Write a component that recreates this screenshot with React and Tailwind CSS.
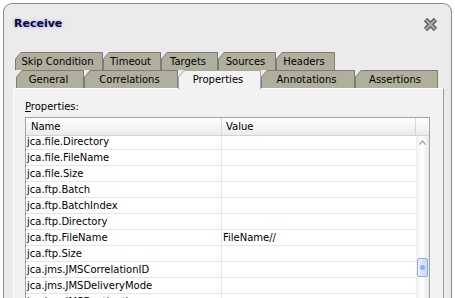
import React from "react";

function Tab({ w, label, selected }) {
  if (selected) {
    return (
      <div className={`${w} relative z-10 h-[19px] -mb-[1px] flex px-[1px] pt-[1px] bg-[#a6a6a6] [clip-path:polygon(6px_0,100%_0,100%_100%,0_100%,0_7px)]`}>
        <div className="flex-1 flex items-center justify-center pr-[3px] pb-[1px] bg-[#f2f2f2] [clip-path:polygon(5px_0,100%_0,100%_100%,0_100%,0_6px)]">
          {label}
        </div>
      </div>
    );
  }
  return (
    <div className={`${w} h-[18px] flex px-[1px] pt-[1px] bg-[#7c7c7c] [clip-path:polygon(6px_0,100%_0,100%_100%,0_100%,0_7px)]`}>
      <div className="flex-1 flex items-center justify-center pr-[3px] bg-[#b0af9b] [clip-path:polygon(5px_0,100%_0,100%_100%,0_100%,0_6px)]">
        {label}
      </div>
    </div>
  );
}

const rows = [
  ["jca.file.Directory", ""],
  ["jca.file.FileName", ""],
  ["jca.file.Size", ""],
  ["jca.ftp.Batch", ""],
  ["jca.ftp.BatchIndex", ""],
  ["jca.ftp.Directory", ""],
  ["jca.ftp.FileName", "FileName//"],
  ["jca.ftp.Size", ""],
  ["jca.jms.JMSCorrelationID", ""],
  ["jca.jms.JMSDeliveryMode", ""],
  ["jca.jms.JMSDestination", ""],
  ["jca.jms.JMSExpiration", ""],
];

export default function App() {
  return (
    <div className="w-[455px] h-[298px] overflow-hidden bg-white pt-[3px] px-[3px] [font-family:'DejaVu_Sans',sans-serif] text-[10px] text-black">
      <div className="h-[320px] rounded-t-[9px] border border-b-0 border-[#8a8a8a] bg-[#ebebeb]">
        <div className="h-[40px] flex items-center justify-between pl-[10px] pr-[13px]">
          <span className="text-[11px] font-bold text-[#0a0a30] [text-shadow:0_0_3px_#8f8fff]">Receive</span>
          <svg width="15" height="15" viewBox="0 0 15 15">
            <path d="M2.5 2.5 L12.5 12.5 M12.5 2.5 L2.5 12.5" stroke="#5a5a5a" strokeWidth="4.6" strokeLinecap="butt" fill="none" />
            <path d="M3 3 L12 12 M12 3 L3 12" stroke="#a9a9a9" strokeWidth="2.4" strokeLinecap="butt" fill="none" />
          </svg>
        </div>

        <div className="mt-[8px] flex items-start pl-[11px] h-[18px]">
          <Tab w="w-[88px]" label="Skip Condition" />
          <Tab w="w-[58px]" label="Timeout" />
          <Tab w="w-[57px]" label="Targets" />
          <Tab w="w-[58px]" label="Sources" />
          <Tab w="w-[59px]" label="Headers" />
        </div>
        <div className="flex items-start pl-[12px] h-[18px]">
          <Tab w="w-[68px]" label="General" />
          <Tab w="w-[94px]" label="Correlations" />
          <Tab w="w-[83px]" label="Properties" selected />
          <Tab w="w-[94px]" label="Annotations" />
          <Tab w="w-[83px]" label="Assertions" />
        </div>

        <div className="ml-[9px] w-[431px] h-[230px] bg-[#f2f2f2] border-t border-t-white border-l border-l-[#fafafa] border-r border-r-[#9a9a9a] pl-[11px] pt-[11px]">
          <div className="leading-[13px]">
            <span className="underline">P</span>roperties:
          </div>
          <div className="mt-[4px] w-[405px] border border-[#a3a3a3] bg-white">
            <div className="flex h-[18px] border-b border-[#d2d2d2] bg-linear-to-b from-[#ffffff] to-[#ebebeb] leading-[17px]">
              <div className="w-[196px] border-r border-[#d8d8d8] pl-[5px]">Name</div>
              <div className="w-[194px] border-r border-[#d8d8d8] pl-[4px]">Value</div>
              <div className="w-[13px]"></div>
            </div>
            <div className="flex h-[170px] overflow-hidden">
              <div className="w-[390px]">
                <div className="-mt-[2px]">
                  {rows.map(([n, v], i) => (
                    <div key={i} className="flex h-[16px] border-b border-[#e6e6e6] leading-[15px]">
                      <div className="w-[196px] border-r border-[#e6e6e6] pl-[1px] whitespace-nowrap">{n}</div>
                      <div className="pl-[1px] whitespace-nowrap">{v}</div>
                    </div>
                  ))}
                </div>
              </div>
              <div className="w-[13px] bg-linear-to-r from-[#f0f0f0] via-[#ffffff] to-[#e6e6e6]">
                <svg className="ml-[3px] mt-[4px]" width="7" height="5" viewBox="0 0 7 5">
                  <polyline points="0.5,4.5 3.5,1 6.5,4.5" stroke="#a5a5a5" strokeWidth="1.3" fill="none" />
                </svg>
                <div className="ml-[1px] mt-[113px] w-[11px] h-[19px] rounded-[2px] border border-[#8cadde] bg-linear-to-r from-[#e9f0fc] to-[#c7d8f4] flex items-center justify-center">
                  <div className="w-[5px] h-[5px] rounded-full bg-[#8eb0ea]"></div>
                </div>
              </div>
            </div>
          </div>
        </div>
      </div>
    </div>
  );
}
